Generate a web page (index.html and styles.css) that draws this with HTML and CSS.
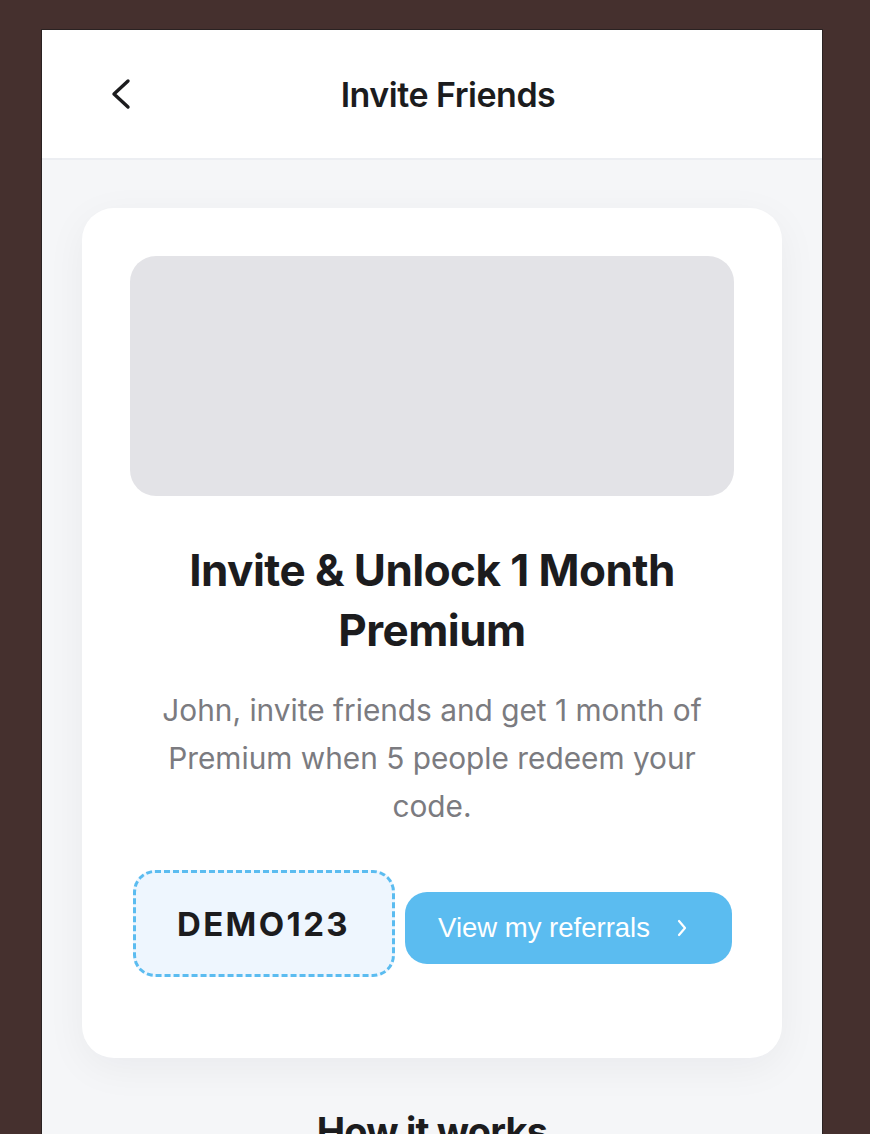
FILE: index.html
```html
<!DOCTYPE html>
<html lang="en">
<head>
    <meta charset="UTF-8">
    <meta name="viewport" content="width=device-width, initial-scale=1.0">
    <title>Invite Friends</title>
    <link rel="stylesheet" href="styles.css">
</head>
<body>
    <div class="phone">
        <header class="topbar">
            <button class="back" aria-label="Back">
                <svg width="24" height="32" viewBox="0 0 24 32" fill="none">
                    <path d="M18 3 L4 16 L18 29" stroke="#1c1c1e" stroke-width="3.4" stroke-linecap="round" stroke-linejoin="round"/>
                </svg>
            </button>
            <h1>Invite Friends</h1>
            <span class="spacer"></span>
        </header>

        <main class="content">
            <section class="card">
                <div class="hero"></div>
                <h2>Invite &amp; Unlock 1 Month Premium</h2>
                <p class="desc">John, invite friends and get 1 month of Premium when 5 people redeem your code.</p>
                <div class="actions">
                    <div class="code">DEMO123</div>
                    <button class="referrals">
                        <span>View my referrals</span>
                        <svg width="12" height="20" viewBox="0 0 12 20" fill="none">
                            <path d="M3 3 L9 10 L3 17" stroke="#ffffff" stroke-width="2.2" stroke-linecap="round" stroke-linejoin="round"/>
                        </svg>
                    </button>
                </div>
            </section>

            <h3>How it works</h3>
        </main>
    </div>
</body>
</html>
```

FILE: styles.css
```css
body {
    margin: 0;
    padding: 29px 0 0 41px;
    background-color: #45302e;
    font-family: Inter, "Noto Sans", sans-serif;
    color: #1c1c1e;
    height: 1134px;
    box-sizing: border-box;
    overflow: hidden;
}
.phone {
    width: 780px;
    height: 1104px;
    overflow: hidden;
    background-color: #f5f6f8;
    border: 1px solid #2a2222;
    border-bottom: none;
}
.topbar {
    height: 130px;
    background-color: #fff;
    border-bottom: 2px solid #eceef2;
    display: flex;
    align-items: center;
    padding: 0 40px;
    box-sizing: border-box;
}
.back {
    width: 80px;
    height: 48px;
    padding: 0 0 0 28px;
    border: none;
    background: none;
    display: flex;
    align-items: center;
}
.topbar h1 {
    flex: 1;
    margin: 0;
    text-align: center;
    font-size: 34px;
    font-weight: 600;
    letter-spacing: -0.5px;
}
.spacer {
    width: 48px;
}
.content {
    padding: 48px 40px 0;
}
.card {
    background-color: #fff;
    border-radius: 32px;
    padding: 48px 48px 81px;
    text-align: center;
    box-shadow: 0 10px 40px rgba(20, 20, 40, 0.05);
}
.hero {
    height: 240px;
    border-radius: 26px;
    background-color: #e3e3e7;
}
.card h2 {
    margin: 44px 0 0;
    font-size: 44px;
    line-height: 60px;
    font-weight: 700;
    letter-spacing: -0.55px;
    padding: 0 30px;
}
.desc {
    margin: 26px 0 0;
    font-size: 29.8px;
    line-height: 48px;
    color: #7b7b80;
    padding: 0 10px;
}
.actions {
    margin-top: 40px;
    display: flex;
    justify-content: center;
    align-items: flex-start;
    gap: 10px;
}
.code {
    width: 262px;
    height: 107px;
    box-sizing: border-box;
    border: 3px dashed #5bbcf0;
    border-radius: 22px;
    background-color: #eef6fe;
    display: flex;
    align-items: center;
    justify-content: center;
    font-size: 33px;
    font-weight: 700;
    letter-spacing: 2.4px;
}
.referrals {
    margin-top: 22px;
    width: 327px;
    height: 72px;
    padding: 0 10px 0 0;
    border: none;
    border-radius: 22px;
    background-color: #5bbcf0;
    color: #fff;
    font-family: "Liberation Sans", Arial, sans-serif;
    font-size: 27.5px;
    display: flex;
    align-items: center;
    justify-content: center;
    gap: 26px;
}
.content h3 {
    margin: 50px 0 0;
    text-align: center;
    font-size: 38px;
    font-weight: 700;
    letter-spacing: -0.8px;
}
```
